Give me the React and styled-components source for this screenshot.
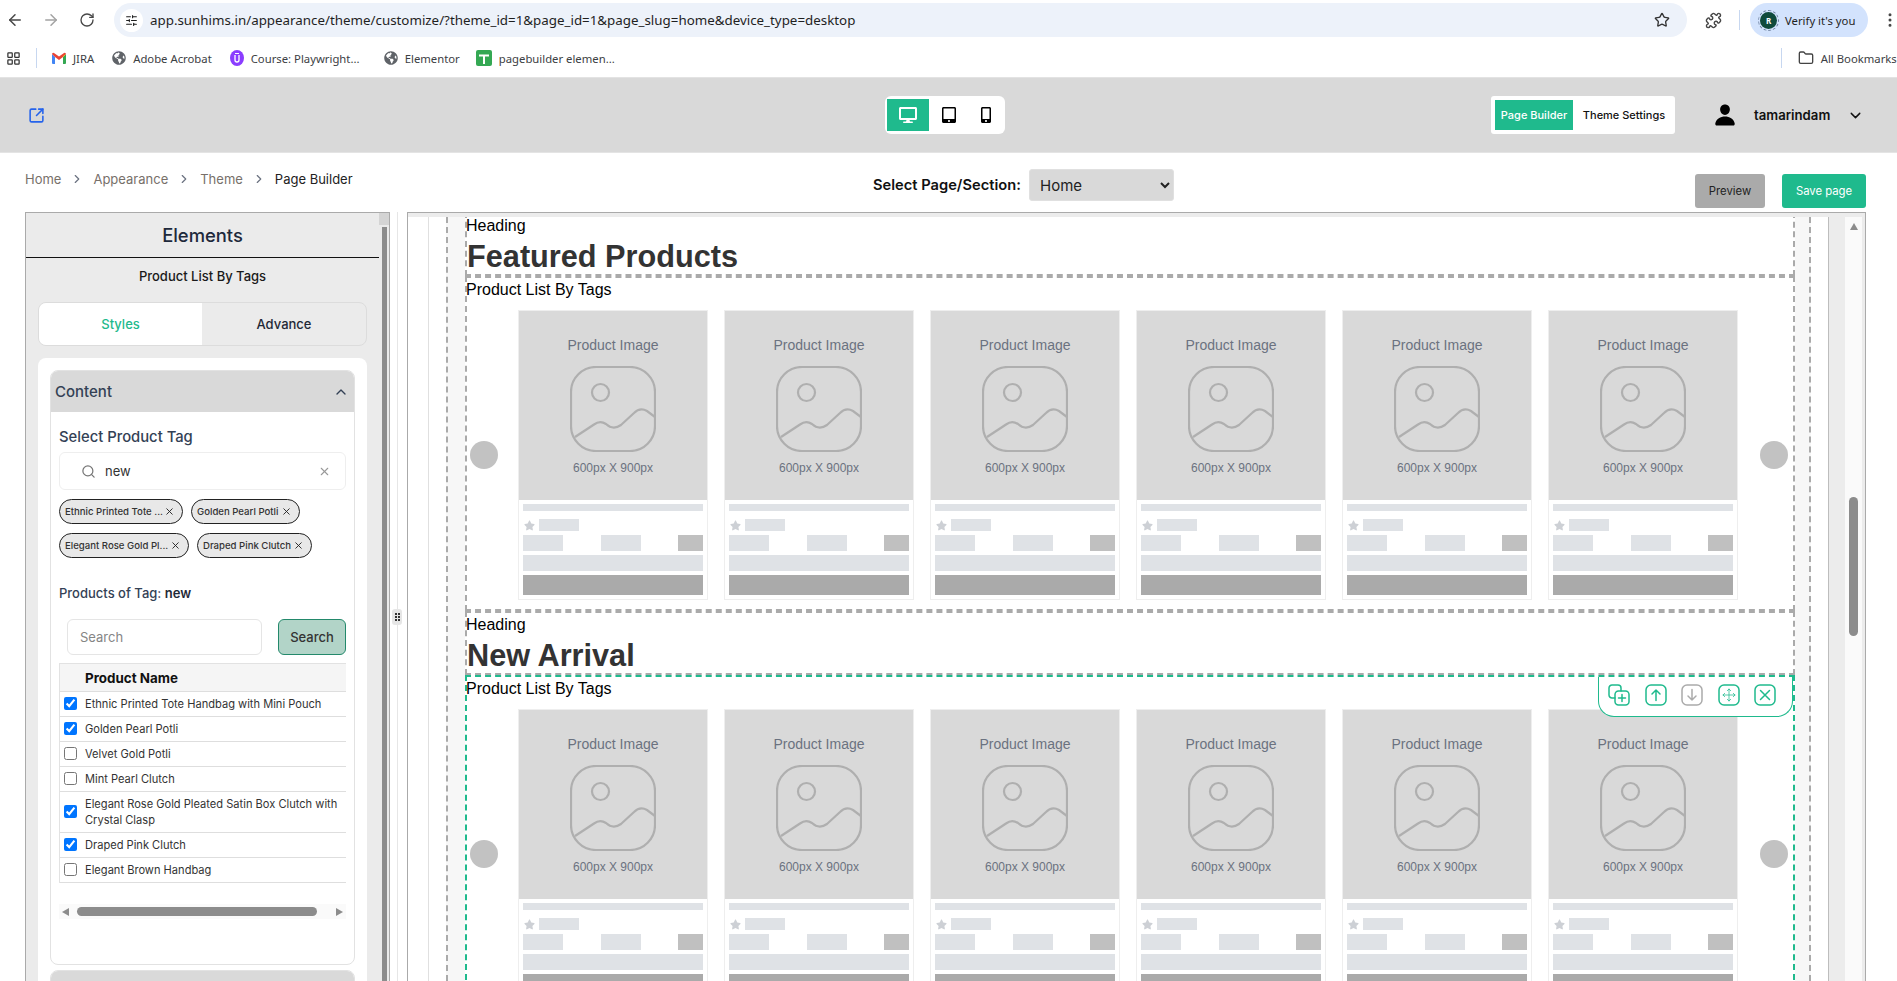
import React from "react";
import styled, { createGlobalStyle } from "styled-components";
import {
  ArrowLeft, ArrowRight, RotateCw, SlidersHorizontal, Star, Puzzle, MoreVertical, LayoutGrid, Folder,
  SquareArrowOutUpRight, ChevronRight, ChevronDown, ChevronUp, Search as SearchIcon, X,
} from "lucide-react";
import { FaGlobeAmericas, FaDesktop, FaTabletAlt, FaMobileAlt, FaStar } from "react-icons/fa";
import { IoPerson } from "react-icons/io5";

const Global = createGlobalStyle`
  html, body { margin: 0; padding: 0; background: #fff; overflow: hidden; }
  * { box-sizing: border-box; }
  #root { width: 1897px; height: 981px; overflow: hidden; }
`;

const Page = styled.div`
  width: 1897px; height: 981px; overflow: hidden; display: flex; flex-direction: column;
  font-family: Inter, "Noto Sans", sans-serif; color: #1f2937; background: #fff;
`;

/* Browser chrome */
const BrowserBar = styled.div`
  height: 39px; padding: 3px 0 2px 5px; display: flex; align-items: center; flex: none; color: #474747; overflow: hidden;
  & > * { flex: none; }
`;
const NavGroup = styled.div`display: flex; gap: 16px; align-items: center;`;
const NavIcon = styled.span`
  display: flex; width: 20px; justify-content: center; margin-left: ${p => p.$ml || 0}px; color: ${p => p.$dim ? "#a3a3a3" : "#474747"};
`;
const AddressBar = styled.div`
  margin-left: 17px; width: 1573px; height: 34px; border-radius: 17px; background: #edf2fa;
  display: flex; align-items: center; padding: 0 17px 0 6px; font: 400 13.35px "Noto Sans", sans-serif; color: #1f1f1f;
`;
const TuneBadge = styled.span`
  width: 23px; height: 23px; border-radius: 50%; background: #fff; display: flex; align-items: center; justify-content: center; margin-right: 7px;
`;
const AddressText = styled.span`flex: 1; white-space: nowrap;`;
const ChromeDivider = styled.span`
  width: 1px; height: 20px; background: #c7d7f0; display: block; flex: none; margin-left: ${p => p.$ml || 0}px;
`;
const VerifyPill = styled.div`
  margin-left: 10px; width: 118px; height: 34px; border-radius: 17px; background: #d3e3fd; display: flex; align-items: center;
  padding-left: 10px; gap: 8px; font: 400 11.3px "Noto Sans", sans-serif; color: #1f1f1f;
`;
const Avatar = styled.span`
  width: 17px; height: 17px; border-radius: 50%; background: #0f4a3c; color: #fff; font-size: 8px; font-weight: 700;
  display: flex; align-items: center; justify-content: center; outline: 1px dashed #6b7f9e; outline-offset: 1px;
`;
const BookmarkBar = styled.div`
  height: 39px; display: flex; align-items: center; padding-left: 6px; flex: none; border-bottom: 1px solid #e3e3e3; overflow: hidden;
  font: 400 11.3px "Noto Sans", sans-serif; color: #3c4043; white-space: nowrap;
  svg { flex: none; }
`;
const Bookmark = styled.span`
  display: flex; align-items: center; flex: none; gap: ${p => p.$gap ?? 7}px; margin-left: ${p => p.$ml ?? 18}px;
  ${p => p.$w ? `width: ${p.$w}px;` : ""}
`;

/* App header */
const AppHeader = styled.header`
  height: 75px; background: #d9d9d9; flex: none; display: flex; align-items: center; padding-left: 28px; border-bottom: 1px solid #e4e4e4;
`;
const ExternalLink = styled.span`display: flex; color: #2563eb;`;
const DeviceSwitch = styled.div`
  margin-left: 840px; width: 120px; height: 38px; background: #fff; border-radius: 6px; display: flex; align-items: center; padding-left: 2px;
`;
const DeviceButton = styled.span`
  width: ${p => p.$w}px; height: 32px; display: flex; align-items: center; justify-content: center;
  background: ${p => p.$active ? "#1fba8d" : "transparent"}; color: ${p => p.$active ? "#fff" : "#000"};
`;
const ModeSwitch = styled.div`
  margin-left: 486px; width: 184px; height: 38px; background: #fff; border-radius: 3px; display: flex; align-items: center; padding-left: 4px;
  font-size: 11px; font-weight: 500;
`;
const ModeButton = styled.span`
  height: 30px; width: ${p => p.$active ? 78 : 102}px; display: flex; align-items: center; justify-content: center;
  background: ${p => p.$active ? "#1fba8d" : "transparent"}; color: ${p => p.$active ? "#fff" : "#111"};
`;
const UserBox = styled.div`
  margin-left: 38px; display: flex; align-items: center; font-size: 13.2px; font-weight: 600; color: #111; gap: 17px;
`;

/* Sub header */
const SubHeader = styled.div`height: 59px; flex: none; display: flex; padding-left: 25px;`;
const Crumbs = styled.nav`
  width: 848px; height: 51px; display: flex; align-items: center; font-size: 13px; color: #77706a;
`;
const CrumbSep = styled.span`display: flex; width: 32px; justify-content: center; color: #6b7280;`;
const CrumbCurrent = styled.span`color: #222;`;
const SelectGroup = styled.div`
  display: flex; align-items: center; justify-content: space-between; height: 32px; margin-top: 16px; font-size: 14.7px; font-weight: 600; color: #111;
  width: 301px; white-space: nowrap; flex: none;
`;
const PageSelect = styled.select`
  width: 145px; height: 32px; background: #d9d9d9; border: 1px solid #e0e0e0; border-radius: 3px; padding-left: 6px;
  font: 400 15px Inter, sans-serif; color: #222;
`;
const ActionButton = styled.button`
  margin-top: 21px; height: 34px; width: ${p => p.$w}px; margin-left: ${p => p.$ml}px; border: 0; border-radius: 3px; flex: none;
  background: ${p => p.$primary ? "#1fba8d" : "#aaaaaa"}; color: ${p => p.$primary ? "#fff" : "#222"};
  font: 400 11.3px Inter, sans-serif;
`;

/* Workspace */
const Workspace = styled.div`flex: 1; display: flex; padding-left: 25px; min-height: 0;`;
const Panel = styled.aside`
  width: 365px; border: 1px solid #aaa; border-bottom: 0; background: #ebebeb; display: flex; overflow: hidden; flex: none;
`;
const PanelBody = styled.div`width: 353px; flex: none; height: 800px;`;
const PanelTitle = styled.div`
  height: 45px; border-bottom: 1px solid #111; display: flex; align-items: center; justify-content: center; font-size: 18.4px; font-weight: 500; color: #1e293b;
`;
const PanelSubtitle = styled.div`
  height: 36px; display: flex; align-items: center; justify-content: center; font-size: 13px; font-weight: 500; color: #1a1a1a;
`;
const Tabs = styled.div`
  margin: 8px 12px 0; height: 44px; display: flex; border: 1px solid #dcdcdc; border-radius: 8px; overflow: hidden;
`;
const Tab = styled.div`
  width: ${p => p.$active ? 163 : 164}px; display: flex; align-items: center; justify-content: center; font-size: 13px; font-weight: 500;
  background: ${p => p.$active ? "#fff" : "transparent"}; color: ${p => p.$active ? "#1fba8d" : "#1f2937"};
`;
const Card = styled.div`margin: 12px 12px 0; background: #fff; border-radius: 8px; padding: 12px;`;
const Accordion = styled.div`border: 1px solid #e2e2e2; border-radius: 8px; overflow: hidden; margin-bottom: 5px;`;
const AccordionHead = styled.div`
  height: 41px; background: #d9d9d9; display: flex; align-items: center; justify-content: space-between; padding: 0 5px 0 4px;
  font-size: 15px; font-weight: 500; color: #334155;
`;
const AccordionBody = styled.div`padding: 14px 8px 45px;`;
const FieldLabel = styled.div`font-size: 14.8px; font-weight: 500; color: #334155; line-height: 22px;`;
const TagInput = styled.div`
  margin-top: 4px; height: 38px; border: 1px solid #eeeeee; border-radius: 6px; display: flex; align-items: center;
  padding: 0 14px 0 21px; gap: 9px; font-size: 13px; color: #333;
`;
const TagValue = styled.span`flex: 1;`;
const Chips = styled.div`margin-top: 9px; display: flex; flex-wrap: wrap; gap: 9px 8px;`;
const Chip = styled.span`
  height: 25px; width: ${p => p.$w}px; border: 1px solid #222; border-radius: 13px; background: #e8e8e8; display: flex; align-items: center;
  justify-content: space-between; padding: 0 7px 0 5px; font-size: 9.6px; color: #333; white-space: nowrap; font-weight: 500;
`;
const ProductsLabel = styled(FieldLabel)`margin-top: 24px; font-size: 13px; font-weight: 500; b { font-weight: 600; color: #1f2937; }`;
const SearchRow = styled.div`margin-top: 15px; display: flex; padding-left: 8px; gap: 16px;`;
const SearchField = styled.input`
  width: 195px; height: 36px; border: 1px solid #e5e5e5; border-radius: 6px; padding: 0 12px; font: 400 13px Inter, sans-serif; outline: none;
  &::placeholder { color: #858585; }
`;
const SearchButton = styled.button`
  width: 68px; height: 36px; background: #b2d4c8; border: 1px solid #23896b; border-radius: 6px; font: 500 13px Inter, sans-serif; color: #333;
`;
const Table = styled.div`margin-top: 8px; border-left: 1px solid #e2e2e2; border-top: 1px solid #e2e2e2;`;
const TableHead = styled.div`
  height: 28px; background: #f5f5f5; display: flex; align-items: center; padding-left: 25px; border-bottom: 1px solid #dedede;
  font-size: 13.4px; font-weight: 700; color: #111;
`;
const TableRow = styled.label`
  display: flex; align-items: center; min-height: 25px; border-bottom: 1px solid #dedede; padding: 4px 0; font-size: 11.1px; line-height: 16px; color: #333;
`;
const RowCheck = styled.input`width: 13px; height: 13px; margin: 0 8px 2px 4px; flex: none; accent-color: #0075ff;`;
const HScroll = styled.div`
  margin-top: 21px; height: 15px; background: #fafafa; display: flex; align-items: center; padding: 0 3px; color: #8c8c8c;
`;
const HThumb = styled.div`width: 240px; height: 9px; border-radius: 5px; background: #8c8c8c; margin: 0 auto 0 8px;`;
const Arrow = styled.span`
  width: 0; height: 0; border-top: 4px solid transparent; border-bottom: 4px solid transparent;
  ${p => p.$left ? "border-right: 7px solid #8c8c8c;" : "border-left: 7px solid #8c8c8c;"}
`;
const PanelScroll = styled.div`width: 10px; flex: none; display: flex; flex-direction: column; align-items: center;`;
const PanelScrollArrow = styled.div`width: 10px; height: 12px; background: #d4d4d4;`;
const PanelScrollThumb = styled.div`margin-top: 2px; width: 5px; flex: 1; background: #8c8c8c;`;

const Gutter = styled.div`width: 17px; flex: none; display: flex; flex-direction: column; align-items: center; position: relative;`;
const GutterLine = styled.div`width: 1px; flex: 1; background: #e6e6e6; margin-left: -2px;`;
const GutterHandle = styled.div`
  position: absolute; top: 397px; left: 2px; width: 10px; height: 16px; border-radius: 3px; background: #e6e6e6;
  display: grid; grid-template-columns: 2px 2px; gap: 1px; align-content: center; justify-content: center;
  i { width: 2px; height: 2px; background: #333; display: block; }
`;

/* Canvas */
const Canvas = styled.main`
  width: 1459px; flex: none; border: 1px solid #aaa; border-bottom: 0; display: flex; flex-direction: column; overflow: hidden; background: #fff;
`;
const CanvasTopStrip = styled.div`height: 4px; background: #ececec; flex: none;`;
const CanvasRow = styled.div`flex: 1; display: flex; min-height: 0;`;
const RulerGap = styled.div`
  width: ${p => p.$w}px; flex: none; background: ${p => p.$bg || "#fff"};
  ${p => p.$left ? `border-left: 2px dashed #aaa;` : ""}
  ${p => p.$right ? `border-right: 2px dashed #aaa;` : ""}
  ${p => p.$line ? `border-right: 1px solid ${p.$line};` : ""}
`;
const Frame = styled.div`width: 1330px; flex: none; overflow: hidden; background: #fff;`;
const FrameInner = styled.div`margin-top: -5px;`;
const Section = styled.section`
  border: 2px dashed ${p => p.$selected ? "#1fba8d" : "#aaa"}; position: relative;
`;
const SectionLabel = styled.div`
  font: 400 16px/23px "Liberation Sans", Arial, sans-serif; color: #000; height: 22px; margin-left: -1px;
`;
const SectionTitle = styled.h2`
  margin: 0; font: 700 30.7px/41px "Liberation Sans", Arial, sans-serif; color: #333; height: 38px;
`;
const ProductRow = styled.div`
  margin-top: 10px; padding: 0 0 9px 3px; display: flex; align-items: center;
`;
const SliderDot = styled.span`width: 28px; height: 28px; border-radius: 50%; background: #c2c2c2; flex: none;`;
const Cards = styled.div`margin: 0 22px 0 20px; display: flex; gap: 16px;`;
const ProductCard = styled.article`width: 190px; height: 290px; border: 1px solid #eeeeee; flex: none; display: flex; flex-direction: column;`;
const ImageBox = styled.div`
  height: 190px; background: #d9d9d9; display: flex; flex-direction: column; align-items: center; padding-top: 25px;
  font-family: "Liberation Sans", Arial, sans-serif; color: #6b7280;
`;
const ImageLabel = styled.div`font-size: 14px; line-height: 18px;`;
const ImageIcon = styled.svg`width: 86px; height: 86px; margin-top: 12px; display: block;`;
const ImageSize = styled.div`font-size: 12px; line-height: 14px; margin-top: 9px;`;
const CardBody = styled.div`padding: 4px; display: flex; flex-direction: column;`;
const Skeleton = styled.div`
  height: ${p => p.$h}px; width: ${p => p.$w ? p.$w + "px" : "auto"}; background: ${p => p.$c || "#dfe2e6"}; margin-top: ${p => p.$mt || 0}px; flex: none;
`;
const RatingRow = styled.div`margin-top: 8px; height: 12px; display: flex; align-items: center; gap: 4px; padding-left: 1px; color: #cdd0d5;`;
const PriceRow = styled.div`margin-top: 4px; display: flex; justify-content: space-between;`;
const Toolbar = styled.div`
  position: absolute; top: 0; right: 0; width: 195px; height: 40px; background: #fff; border: 1px solid #1fba8d; border-top: 0;
  border-radius: 0 0 16px 16px; display: flex; align-items: center; padding: 0 0 4px 9px; gap: 14.6px; z-index: 2;
`;
const ToolIcon = styled.svg`width: 22px; height: 22px; display: block; flex: none; fill: none; stroke: ${p => p.$muted ? "#ababab" : "#1fba8d"}; stroke-width: 1.5; stroke-linecap: round; stroke-linejoin: round;`;
const ToolGlyph = styled.path`stroke-width: 1; opacity: 0.75;`;

const ScrollShelf = styled.div`
  width: 36px; flex: none; display: flex; background: #ececec; padding-left: 16px; 
`;
const ScrollTrack = styled.div`width: 17px; background: #fafafa; display: flex; flex-direction: column; align-items: center; padding-top: 6px;`;
const ScrollUp = styled.span`width: 0; height: 0; border-left: 4px solid transparent; border-right: 4px solid transparent; border-bottom: 7px solid #8c8c8c;`;
const ScrollThumb = styled.div`margin-top: 267px; width: 9px; height: 139px; border-radius: 5px; background: #8c8c8c;`;

const GmailMark = () => (
  <svg width="14" height="12" viewBox="0 0 14 12">
    <path d="M0 2v9a1 1 0 0 0 1 1h2V5z" fill="#4285f4" />
    <path d="M14 2v9a1 1 0 0 1-1 1h-2V5z" fill="#34a853" />
    <path d="M0 2l3 3 4 3 4-3 3-3a1.3 1.3 0 0 0-2-1L7 4.5 2 1A1.3 1.3 0 0 0 0 2z" fill="#ea4335" />
    <path d="M11 5l3-3v0l-3 2z" fill="#fbbc04" />
  </svg>
);
const UdemyMark = () => (
  <svg width="14" height="16" viewBox="0 0 14 16">
    <ellipse cx="7" cy="8" rx="7" ry="8" fill="#8b3dff" />
    <path d="M5 5v5a2 2 0 0 0 4 0V5" fill="none" stroke="#fff" strokeWidth="1.3" />
    <path d="M5 3.5h4" stroke="#fff" strokeWidth="1" />
  </svg>
);
const SheetMark = () => (
  <svg width="16" height="16" viewBox="0 0 16 16">
    <rect width="16" height="16" rx="2" fill="#34a853" />
    <path d="M3 5.5h10M8 5.5V14" stroke="#fff" strokeWidth="2" />
  </svg>
);

const PlaceholderArt = () => (
  <ImageIcon viewBox="0 0 86 86" fill="none" stroke="#afafaf" strokeWidth="2.2">
    <rect x="1" y="1" width="84" height="84" rx="25" />
    <circle cx="30.5" cy="26.5" r="8.5" />
    <path d="M5 71 L24 58.5 Q30 54 36 58 Q43 64.5 51 59 L64 47 Q70 41 77 45 L85 51" />
  </ImageIcon>
);

const Product = () => (
  <ProductCard>
    <ImageBox>
      <ImageLabel>Product Image</ImageLabel>
      <PlaceholderArt />
      <ImageSize>600px X 900px</ImageSize>
    </ImageBox>
    <CardBody>
      <Skeleton $h={7} />
      <RatingRow>
        <FaStar size={11} />
        <Skeleton $h={12} $w={40} />
      </RatingRow>
      <PriceRow>
        <Skeleton $h={16} $w={40} />
        <Skeleton $h={16} $w={40} />
        <Skeleton $h={16} $w={25} $c="#c0c0c0" />
      </PriceRow>
      <Skeleton $h={16} $mt={4} />
      <Skeleton $h={20} $mt={4} $c="#aaaaaa" />
    </CardBody>
  </ProductCard>
);

const ProductSection = ({ selected }) => (
  <Section $selected={selected}>
    <SectionLabel>Product List By Tags</SectionLabel>
    {selected && (
      <Toolbar>
        <ToolIcon viewBox="0 0 22 22">
          <path d="M7 14H4a3 3 0 0 1-3-3V4a3 3 0 0 1 3-3h6a3 3 0 0 1 3 3v3" />
          <rect x="7" y="7" width="14" height="14" rx="3.5" />
          <path d="M14 10.5v7M10.5 14h7" />
        </ToolIcon>
        <ToolIcon viewBox="0 0 22 22"><rect x="1" y="1" width="20" height="20" rx="5" /><path d="M11 16.5V6M7 10l4-4 4 4" /></ToolIcon>
        <ToolIcon viewBox="0 0 22 22" $muted><rect x="1" y="1" width="20" height="20" rx="5" /><path d="M11 5.5V16M7 12l4 4 4-4" /></ToolIcon>
        <ToolIcon viewBox="0 0 22 22"><rect x="1" y="1" width="20" height="20" rx="5" /><ToolGlyph d="M11 5v12M5 11h12M9.3 6.7 11 5l1.7 1.7M9.3 15.3 11 17l1.7-1.7M6.7 9.3 5 11l1.7 1.7M15.3 9.3 17 11l-1.7 1.7" /></ToolIcon>
        <ToolIcon viewBox="0 0 22 22"><rect x="1" y="1" width="20" height="20" rx="5" /><path d="M6.5 6.5l9 9M15.5 6.5l-9 9" /></ToolIcon>
      </Toolbar>
    )}
    <ProductRow>
      <SliderDot />
      <Cards>
        {[0, 1, 2, 3, 4, 5].map(i => <Product key={i} />)}
      </Cards>
      <SliderDot />
    </ProductRow>
  </Section>
);

const HeadingSection = ({ title }) => (
  <Section>
    <SectionLabel>Heading</SectionLabel>
    <SectionTitle>{title}</SectionTitle>
  </Section>
);

const rows = [
  ["Ethnic Printed Tote Handbag with Mini Pouch", true],
  ["Golden Pearl Potli", true],
  ["Velvet Gold Potli", false],
  ["Mint Pearl Clutch", false],
  ["Elegant Rose Gold Pleated Satin Box Clutch with Crystal Clasp", true],
  ["Draped Pink Clutch", true],
  ["Elegant Brown Handbag", false],
];
const chips = [
  ["Ethnic Printed Tote ...", 124],
  ["Golden Pearl Potli", 109],
  ["Elegant Rose Gold Pl...", 130],
  ["Draped Pink Clutch", 115],
];

export default function App() {
  return (
    <Page>
      <Global />
      <BrowserBar>
        <NavGroup>
          <NavIcon><ArrowLeft size={18} /></NavIcon>
          <NavIcon $dim><ArrowRight size={18} /></NavIcon>
          <NavIcon><RotateCw size={16} /></NavIcon>
        </NavGroup>
        <AddressBar>
          <TuneBadge><SlidersHorizontal size={13} /></TuneBadge>
          <AddressText>app.sunhims.in/appearance/theme/customize/?theme_id=1&amp;page_id=1&amp;page_slug=home&amp;device_type=desktop</AddressText>
          <Star size={16} color="#333" />
        </AddressBar>
        <NavIcon $ml={16}><Puzzle size={17} /></NavIcon>
        <ChromeDivider $ml={16} />
        <VerifyPill><Avatar>R</Avatar>Verify it's you</VerifyPill>
        <NavIcon $ml={12}><MoreVertical size={18} /></NavIcon>
      </BrowserBar>
      <BookmarkBar>
        <LayoutGrid size={15} color="#333" />
        <ChromeDivider $ml={15} />
        <Bookmark $ml={15}><GmailMark />JIRA</Bookmark>
        <Bookmark><FaGlobeAmericas size={14} color="#5f6368" />Adobe Acrobat</Bookmark>
        <Bookmark $w={136}><UdemyMark />Course: Playwright...</Bookmark>
        <Bookmark $ml={18}><FaGlobeAmericas size={14} color="#5f6368" />Elementor</Bookmark>
        <Bookmark $ml={16}><SheetMark />pagebuilder elemen...</Bookmark>
        <ChromeDivider $ml={1166} />
        <Bookmark $ml={16}><Folder size={16} color="#444" />All Bookmarks</Bookmark>
      </BookmarkBar>
      <AppHeader>
        <ExternalLink><SquareArrowOutUpRight size={17} strokeWidth={2.2} /></ExternalLink>
        <DeviceSwitch>
          <DeviceButton $active $w={42}><FaDesktop size={18} /></DeviceButton>
          <DeviceButton $w={40}><FaTabletAlt size={16} /></DeviceButton>
          <DeviceButton $w={34}><FaMobileAlt size={16} /></DeviceButton>
        </DeviceSwitch>
        <ModeSwitch>
          <ModeButton $active>Page Builder</ModeButton>
          <ModeButton>Theme Settings</ModeButton>
        </ModeSwitch>
        <UserBox>
          <IoPerson size={24} color="#000" />
          <span>tamarindam</span>
          <ChevronDown size={17} />
        </UserBox>
      </AppHeader>
      <SubHeader>
        <Crumbs>
          <span>Home</span>
          <CrumbSep><ChevronRight size={14} /></CrumbSep>
          <span>Appearance</span>
          <CrumbSep><ChevronRight size={14} /></CrumbSep>
          <span>Theme</span>
          <CrumbSep><ChevronRight size={14} /></CrumbSep>
          <CrumbCurrent>Page Builder</CrumbCurrent>
        </Crumbs>
        <SelectGroup>
          <span>Select Page/Section:</span>
          <PageSelect defaultValue="Home"><option>Home</option></PageSelect>
        </SelectGroup>
        <ActionButton $w={70} $ml={521}>Preview</ActionButton>
        <ActionButton $w={84} $ml={17} $primary>Save page</ActionButton>
      </SubHeader>
      <Workspace>
        <Panel>
          <PanelBody>
            <PanelTitle>Elements</PanelTitle>
            <PanelSubtitle>Product List By Tags</PanelSubtitle>
            <Tabs>
              <Tab $active>Styles</Tab>
              <Tab>Advance</Tab>
            </Tabs>
            <Card>
              <Accordion>
                <AccordionHead>Content<ChevronUp size={16} /></AccordionHead>
                <AccordionBody>
                  <FieldLabel>Select Product Tag</FieldLabel>
                  <TagInput>
                    <SearchIcon size={15} color="#777" />
                    <TagValue>new</TagValue>
                    <X size={13} color="#999" />
                  </TagInput>
                  <Chips>
                    {chips.map(([t, w]) => (
                      <Chip key={t} $w={w}>{t}<X size={11} color="#222" /></Chip>
                    ))}
                  </Chips>
                  <ProductsLabel>Products of Tag: <b>new</b></ProductsLabel>
                  <SearchRow>
                    <SearchField placeholder="Search" />
                    <SearchButton>Search</SearchButton>
                  </SearchRow>
                  <Table>
                    <TableHead>Product Name</TableHead>
                    {rows.map(([name, on]) => (
                      <TableRow key={name}>
                        <RowCheck type="checkbox" defaultChecked={on} />
                        <span>{name}</span>
                      </TableRow>
                    ))}
                  </Table>
                  <HScroll>
                    <Arrow $left />
                    <HThumb />
                    <Arrow />
                  </HScroll>
                </AccordionBody>
              </Accordion>
              <Accordion><AccordionHead /></Accordion>
            </Card>
          </PanelBody>
          <PanelScroll>
            <PanelScrollArrow />
            <PanelScrollThumb />
          </PanelScroll>
        </Panel>
        <Gutter>
          <GutterLine />
          <GutterHandle><i /><i /><i /><i /><i /><i /></GutterHandle>
        </Gutter>
        <Canvas>
          <CanvasTopStrip />
          <CanvasRow>
            <RulerGap $w={21} $line="#e0e0e0" />
            <RulerGap $w={17} />
            <RulerGap $w={19} $bg="#f7f7f7" $left />
            <Frame>
              <FrameInner>
                <HeadingSection title="Featured Products" />
                <ProductSection />
                <HeadingSection title="New Arrival" />
                <ProductSection selected />
              </FrameInner>
            </Frame>
            <RulerGap $w={16} $bg="#f7f7f7" $right />
            <RulerGap $w={18} $line="#bdbdbd" />
            <ScrollShelf>
              <ScrollTrack>
                <ScrollUp />
                <ScrollThumb />
              </ScrollTrack>
            </ScrollShelf>
          </CanvasRow>
        </Canvas>
      </Workspace>
    </Page>
  );
}
